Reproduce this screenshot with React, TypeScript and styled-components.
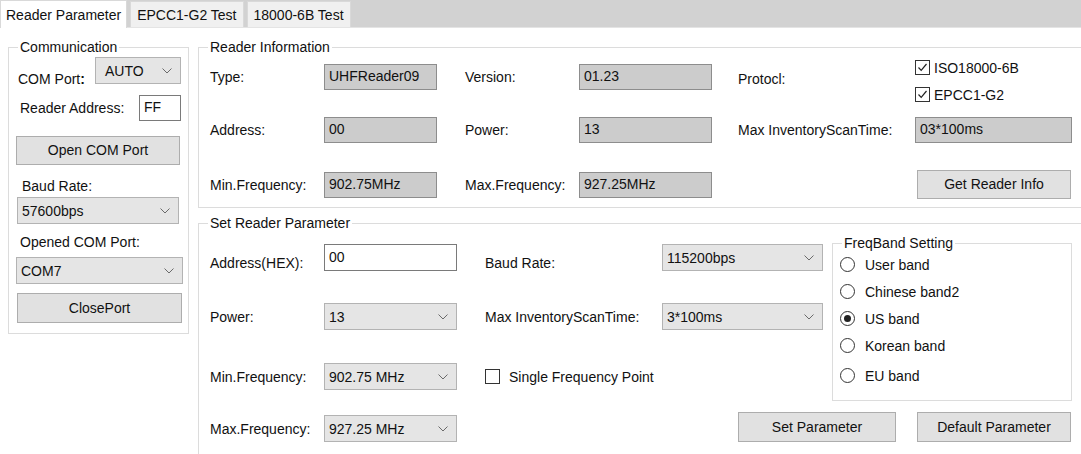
import React from "react";
import styled, { createGlobalStyle } from "styled-components";

const GlobalStyle = createGlobalStyle`
  html, body {
    margin: 0;
    padding: 0;
    background: #ffffff;
  }
  body {
    font-family: "Liberation Sans", Arial, sans-serif;
    font-size: 14px;
    color: #111;
  }
`;

const Window = styled.div`
  width: 1081px;
  height: 454px;
  overflow: hidden;
  background: #ffffff;
  display: flex;
  flex-direction: column;
`;

const TabStrip = styled.div`
  display: flex;
  align-items: flex-end;
  height: 27px;
  flex-shrink: 0;
  background: #d2d2d2;
  border-bottom: 1px solid #e4e4e4;
`;

const Tab = styled.div<{ $active?: boolean }>`
  height: ${p => (p.$active ? 28 : 26)}px;
  margin-bottom: ${p => (p.$active ? -1 : 0)}px;
  padding: 0 ${p => (p.$active ? 5 : 6)}px;
  margin-left: ${p => (p.$active ? 0 : 3)}px;
  display: flex;
  align-items: center;
  box-sizing: border-box;
  background: ${p => (p.$active ? "#ffffff" : "#f0f0f0")};
  border: 1px solid #d9d9d9;
  border-bottom: none;
  white-space: nowrap;
`;

const Body = styled.div`
  display: flex;
  gap: 9px;
  padding: 11px 0 0 8px;
`;

const Group = styled.fieldset<{ $w?: number; $h?: number }>`
  margin: 0;
  flex-shrink: 0;
  box-sizing: border-box;
  min-width: 0;
  ${p => (p.$w ? `width: ${p.$w}px;` : "")}
  ${p => (p.$h ? `height: ${p.$h}px;` : "")}
  border: 1px solid #dcdcdc;
  border-radius: 0;
  padding: 0;
`;

/* title sits 12px in from the group's outer edge whatever the padding */
const Legend = styled.legend<{ $pad: number }>`
  margin-left: ${p => 9 - p.$pad}px;
  padding: 0 2px;
  line-height: 16px;
`;

const CommGroup = styled(Group)`
  padding: 2px 0 0 7px;
  display: flex;
  flex-direction: column;
  align-items: flex-start;
`;

const RightColumn = styled.div`
  width: 900px;
  flex-shrink: 0;
  display: flex;
  flex-direction: column;
  gap: 7px;
`;

const InfoGroup = styled(Group)`
  padding: 9px 0 0 11px;
`;

const InfoGrid = styled.div`
  display: grid;
  grid-template-columns: 114px 141px 114px 159px 177px 157px;
  grid-template-rows: 26px 26px 29px;
  row-gap: 27px;
  align-items: center;
`;

const SetGroup = styled(Group)`
  padding: 13px 0 0 11px;
  height: 260px;
`;

const SetGrid = styled.div`
  display: grid;
  grid-template-columns: 114px 161px 177px 170px 240px;
  grid-template-rows: 59px 60px 49px 30px;
  align-items: start;
`;

const Label = styled.div<{ $drop?: number; $h?: number }>`
  height: ${p => p.$h ?? 27}px;
  display: flex;
  align-items: center;
  white-space: nowrap;
  margin-top: ${p => p.$drop ?? 0}px;
`;

const FieldLabel = styled.div<{ $mt?: number; $ml?: number }>`
  line-height: 16px;
  white-space: nowrap;
  margin-top: ${p => p.$mt ?? 0}px;
  margin-left: ${p => p.$ml ?? 0}px;
`;

const TextBox = styled.div<{ $w: number; $h?: number; $readOnly?: boolean }>`
  width: ${p => p.$w}px;
  height: ${p => p.$h ?? 26}px;
  box-sizing: border-box;
  display: flex;
  align-items: center;
  padding: 0 4px 2px;
  background: ${p => (p.$readOnly ? "#cccccc" : "#ffffff")};
  border: 1px solid ${p => (p.$readOnly ? "#8d8d8d" : "#7a7a7a")};
  white-space: nowrap;
`;

const ComboBox = styled.div<{ $w: number; $pad?: number }>`
  width: ${p => p.$w}px;
  height: 27px;
  box-sizing: border-box;
  display: flex;
  align-items: center;
  justify-content: space-between;
  padding: 0 8px 0 ${p => p.$pad ?? 4}px;
  background: #e5e5e5;
  border: 1px solid #b3b3b3;
  white-space: nowrap;
`;

const Button = styled.div<{ $w: number; $h?: number }>`
  width: ${p => p.$w}px;
  height: ${p => p.$h ?? 29}px;
  box-sizing: border-box;
  display: flex;
  align-items: center;
  justify-content: center;
  padding-bottom: 1px;
  background: #e1e1e1;
  border: 1px solid #adadad;
  white-space: nowrap;
`;

const CommRow = styled.div<{ $mt?: number; $h: number }>`
  width: 165px;
  height: ${p => p.$h}px;
  margin-top: ${p => p.$mt ?? 0}px;
  display: flex;
  justify-content: space-between;
  align-items: center;
`;

const Spaced = styled.div<{ $mt?: number; $ml?: number; $end?: boolean }>`
  margin-top: ${p => p.$mt ?? 0}px;
  margin-left: ${p => p.$ml ?? 0}px;
  ${p => (p.$end ? "align-self: end;" : "")}
`;

const CheckStack = styled.div`
  align-self: start;
  margin-top: -10px;
  display: flex;
  flex-direction: column;
`;

const CheckRow = styled.div<{ $gap?: number; $h?: number; $span?: number }>`
  display: flex;
  align-items: center;
  gap: ${p => p.$gap ?? 4}px;
  height: ${p => p.$h ?? 27}px;
  white-space: nowrap;
  ${p => (p.$span ? `grid-column: span ${p.$span};` : "")}
`;

const Box = styled.div`
  width: 15px;
  height: 15px;
  box-sizing: border-box;
  border: 1px solid #333;
  background: #fff;
  display: flex;
  align-items: center;
  justify-content: center;
`;

const FreqGroup = styled(Group)`
  grid-column: 5;
  grid-row: 1 / span 3;
  margin-top: -9px;
  padding: 0 0 0 7px;
  display: flex;
  flex-direction: column;
`;

const RadioRow = styled.div<{ $mt?: number }>`
  display: flex;
  align-items: center;
  gap: 10px;
  height: 27px;
  margin-top: ${p => p.$mt ?? 0}px;
  white-space: nowrap;
`;

const Radio = styled.div<{ $on?: boolean }>`
  width: 15px;
  height: 15px;
  box-sizing: border-box;
  border-radius: 50%;
  border: 1px solid #333;
  background: #fff;
  display: flex;
  align-items: center;
  justify-content: center;

  &::after {
    content: "";
    width: 7px;
    height: 7px;
    border-radius: 50%;
    background: ${p => (p.$on ? "#222" : "transparent")};
  }
`;

const ButtonBar = styled.div`
  grid-column: 3 / span 3;
  grid-row: 4;
  justify-self: end;
  margin-right: 1px;
  display: flex;
  gap: 21px;
`;

const Chevron = () => (
  <svg width="10" height="6" viewBox="0 0 10 6">
    <polyline points="0.5,0.5 5,5 9.5,0.5" fill="none" stroke="#6a6a6a" strokeWidth="1" />
  </svg>
);

const Check = () => (
  <svg width="13" height="13" viewBox="0 0 13 13">
    <polyline points="2.5,6.5 5.2,9.4 10.5,3" fill="none" stroke="#222" strokeWidth="1.2" />
  </svg>
);

function Combo({ w, value, pad }: { w: number; value: string; pad?: number }) {
  return (
    <ComboBox $w={w} $pad={pad}>
      <span>{value}</span>
      <Chevron />
    </ComboBox>
  );
}

const bands = [
  { name: "User band" },
  { name: "Chinese band2" },
  { name: "US band", on: true },
  { name: "Korean band" },
  { name: "EU band", mt: 3 },
];

export default function App() {
  return (
    <Window>
      <GlobalStyle />
      <TabStrip>
        <Tab $active>Reader Parameter</Tab>
        <Tab>EPCC1-G2 Test</Tab>
        <Tab>18000-6B Test</Tab>
      </TabStrip>

      <Body>
        <CommGroup $w={181} $h={295}>
          <Legend $pad={7}>Communication</Legend>
          <CommRow $h={27}>
            <FieldLabel $ml={2} $mt={16}>
              COM Port<b>:</b>
            </FieldLabel>
            <Combo w={86} value="AUTO" pad={9} />
          </CommRow>
          <CommRow $h={26} $mt={11}>
            <FieldLabel $ml={4}>Reader Address:</FieldLabel>
            <TextBox $w={42}>FF</TextBox>
          </CommRow>
          <Spaced $mt={15}>
            <Button $w={164}>Open COM Port</Button>
          </Spaced>
          <FieldLabel $mt={13} $ml={6}>Baud Rate:</FieldLabel>
          <Spaced $mt={3} $ml={1}>
            <Combo w={162} value="57600bps" />
          </Spaced>
          <FieldLabel $mt={10} $ml={4}>Opened COM Port:</FieldLabel>
          <Spaced $mt={7}>
            <Combo w={167} value="COM7" />
          </Spaced>
          <Spaced $mt={9} $ml={1}>
            <Button $w={165} $h={30}>ClosePort</Button>
          </Spaced>
        </CommGroup>

        <RightColumn>
          <InfoGroup $h={169}>
            <Legend $pad={11}>Reader Information</Legend>
            <InfoGrid>
              <Label $h={26}>Type:</Label>
              <TextBox $w={113} $readOnly>UHFReader09</TextBox>
              <Label $h={26}>Version:</Label>
              <TextBox $w={133} $readOnly>01.23</TextBox>
              <Label $h={26} $drop={4}>Protocl:</Label>
              <CheckStack>
                <CheckRow>
                  <Box><Check /></Box>
                  ISO18000-6B
                </CheckRow>
                <CheckRow>
                  <Box><Check /></Box>
                  EPCC1-G2
                </CheckRow>
              </CheckStack>

              <Label $h={26}>Address:</Label>
              <TextBox $w={113} $readOnly>00</TextBox>
              <Label $h={26}>Power:</Label>
              <TextBox $w={133} $readOnly>13</TextBox>
              <Label $h={26}>Max InventoryScanTime:</Label>
              <TextBox $w={157} $readOnly>03*100ms</TextBox>

              <Label $h={26}>Min.Frequency:</Label>
              <TextBox $w={113} $readOnly>902.75MHz</TextBox>
              <Label $h={26}>Max.Frequency:</Label>
              <TextBox $w={133} $readOnly>927.25MHz</TextBox>
              <span />
              <Spaced $ml={2}>
                <Button $w={154}>Get Reader Info</Button>
              </Spaced>
            </InfoGrid>
          </InfoGroup>

          <SetGroup>
            <Legend $pad={11}>Set Reader Parameter</Legend>
            <SetGrid>
              <Label $drop={5}>Address(HEX):</Label>
              <TextBox $w={133} $h={27}>00</TextBox>
              <Label $drop={5}>Baud Rate:</Label>
              <Combo w={161} value="115200bps" />
              <FreqGroup $w={240} $h={166}>
                <Legend $pad={7}>FreqBand Setting</Legend>
                {bands.map(b => (
                  <RadioRow key={b.name} $mt={b.mt}>
                    <Radio $on={b.on} />
                    {b.name}
                  </RadioRow>
                ))}
              </FreqGroup>

              <Label>Power:</Label>
              <Combo w={133} value="13" />
              <Label>Max InventoryScanTime:</Label>
              <Combo w={161} value="3*100ms" />

              <Label>Min.Frequency:</Label>
              <Combo w={133} value="902.75 MHz" />
              <CheckRow $gap={9} $span={2}>
                <Box />
                Single Frequency Point
              </CheckRow>

              <Spaced $end>
                <Label>Max.Frequency:</Label>
              </Spaced>
              <Spaced $end>
                <Combo w={133} value="927.25 MHz" />
              </Spaced>
              <ButtonBar>
                <Button $w={158} $h={30}>Set Parameter</Button>
                <Button $w={154} $h={30}>Default Parameter</Button>
              </ButtonBar>
            </SetGrid>
          </SetGroup>
        </RightColumn>
      </Body>
    </Window>
  );
}
